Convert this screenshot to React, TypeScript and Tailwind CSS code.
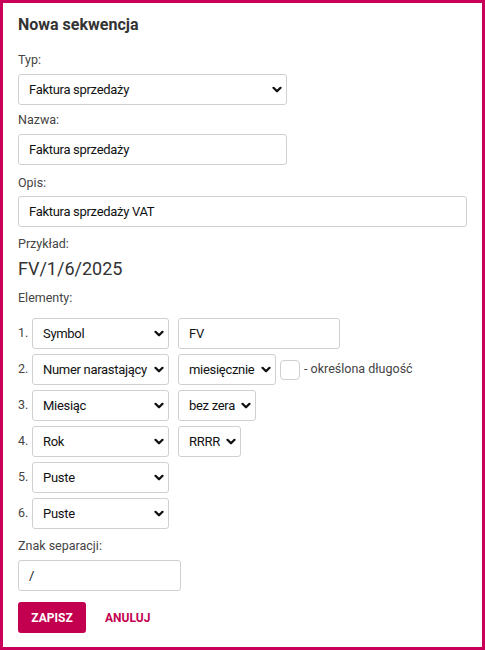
import React from 'react';

const font = { fontFamily: 'Roboto, "Noto Sans", Arial, sans-serif' };

function Chevron() {
  return (
    <svg width="10" height="7" viewBox="0 0 10 7" className="pointer-events-none absolute right-[4px] top-1/2 -translate-y-1/2">
      <path d="M1.5 1.3 L5 4.8 L8.5 1.3" fill="none" stroke="#111" strokeWidth="2.3" strokeLinecap="round" strokeLinejoin="round" />
    </svg>
  );
}

function Select({ value, w }: { value: string; w: string }) {
  return (
    <div className={`relative h-[31px] ${w} shrink-0 rounded-[3px] border border-[#d0d0d0] bg-white`}>
      <div className="flex h-full items-center pl-[10px] text-[13px] tracking-[-0.3px] text-[#111]">{value}</div>
      <Chevron />
    </div>
  );
}

function Input({ value, w }: { value: string; w: string }) {
  return (
    <div className={`flex h-[31px] ${w} shrink-0 items-center rounded-[3px] border border-[#d0d0d0] bg-white pl-[10px] text-[13px] tracking-[-0.3px] text-[#111]`}>
      {value}
    </div>
  );
}

function Label({ children, mt = 'mt-[9px]' }: { children: React.ReactNode; mt?: string }) {
  return <div className={`${mt} text-[12.5px] leading-[16px] text-[#444]`}>{children}</div>;
}

function Row({ n, children }: { n: number; children: React.ReactNode }) {
  return (
    <div className="flex items-center">
      <span className="w-[14px] text-[12.5px] text-[#444]">{n}.</span>
      {children}
    </div>
  );
}

export default function App() {
  return (
    <div style={font} className="h-[650px] w-[485px] border-[3px] border-[#c8005a] bg-white px-[15px] pt-[12px]">
      <h1 className="text-[16px] font-bold leading-[20px] text-[#333]">Nowa sekwencja</h1>

      <Label mt="mt-[17px]">Typ:</Label>
      <div className="mt-[6px]">
        <Select value="Faktura sprzedaży" w="w-[269px]" />
      </div>

      <Label mt="mt-[7px]">Nazwa:</Label>
      <div className="mt-[6px]">
        <Input value="Faktura sprzedaży" w="w-[269px]" />
      </div>

      <Label mt="mt-[10px]">Opis:</Label>
      <div className="mt-[5px]">
        <Input value="Faktura sprzedaży VAT" w="w-[449px]" />
      </div>

      <Label>Przykład:</Label>
      <div className="mt-[6px] text-[18px] leading-[22px] text-[#333]">FV/1/6/2025</div>

      <Label mt="mt-[10px]">Elementy:</Label>
      <div className="mt-[12px] flex flex-col gap-[5px]">
        <Row n={1}>
          <Select value="Symbol" w="w-[137px]" />
          <div className="ml-[9px]">
            <Input value="FV" w="w-[162px]" />
          </div>
        </Row>
        <Row n={2}>
          <Select value="Numer narastający" w="w-[137px]" />
          <div className="ml-[9px]">
            <Select value="miesięcznie" w="w-[98px]" />
          </div>
          <div className="ml-[4px] h-[20px] w-[20px] rounded-[4px] border border-[#d0d0d0] bg-white" />
          <span className="ml-[4px] text-[12.5px] text-[#444]">- określona długość</span>
        </Row>
        <Row n={3}>
          <Select value="Miesiąc" w="w-[137px]" />
          <div className="ml-[9px]">
            <Select value="bez zera" w="w-[78px]" />
          </div>
        </Row>
        <Row n={4}>
          <Select value="Rok" w="w-[137px]" />
          <div className="ml-[9px]">
            <Select value="RRRR" w="w-[63px]" />
          </div>
        </Row>
        <Row n={5}>
          <Select value="Puste" w="w-[137px]" />
        </Row>
        <Row n={6}>
          <Select value="Puste" w="w-[137px]" />
        </Row>
      </div>

      <Label>Znak separacji:</Label>
      <div className="mt-[6px]">
        <Input value="/" w="w-[163px]" />
      </div>

      <div className="mt-[11px] flex items-center">
        <button className="h-[31px] w-[68px] rounded-[3px] bg-[#c2004f] text-[12px] font-bold text-white">ZAPISZ</button>
        <button className="ml-[19px] text-[12px] font-bold text-[#c2004f]">ANULUJ</button>
      </div>
    </div>
  );
}
